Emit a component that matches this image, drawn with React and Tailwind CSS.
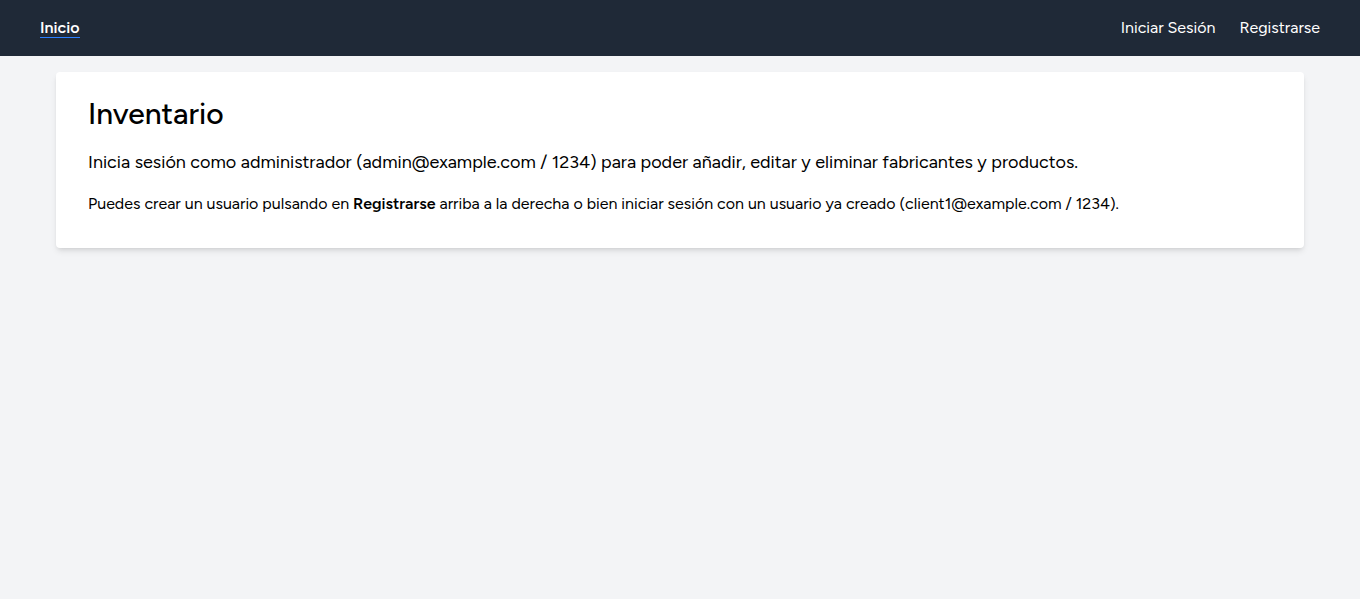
export default function App() {
  return (
    <div className="min-h-screen bg-gray-100 font-['Figtree','Inter',sans-serif] text-base text-black">
      <nav className="flex h-14 items-center justify-between bg-[#1f2937] px-10 text-white">
        <div>
          <a href="#inicio" className="border-b border-blue-500 font-semibold">Inicio</a>
        </div>
        <div className="flex gap-6">
          <a href="#login">Iniciar Sesión</a>
          <a href="#register">Registrarse</a>
        </div>
      </nav>
      <main className="mx-14 mt-4 rounded bg-white px-8 pt-6 pb-8 shadow-md">
        <h1 className="mb-4 text-3xl font-medium">Inventario</h1>
        <p className="mb-4 text-lg">
          Inicia sesión como administrador (admin@example.com / 1234) para poder añadir, editar y eliminar fabricantes y productos.
        </p>
        <p>
          Puedes crear un usuario pulsando en <strong className="font-semibold">Registrarse</strong> arriba a la derecha o bien iniciar sesión con un usuario ya creado (client1@example.com / 1234).
        </p>
      </main>
    </div>
  );
}
